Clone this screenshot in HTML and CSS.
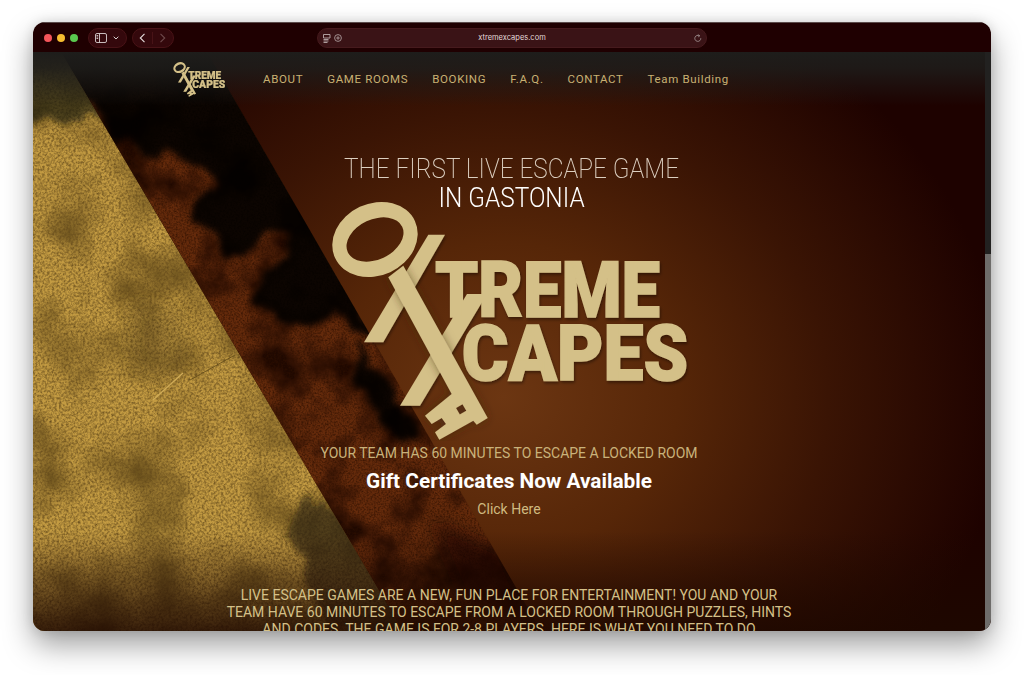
FILE: index.html
```html
<!DOCTYPE html>
<html lang="en">
<head>
    <meta charset="UTF-8">
    <meta name="viewport" content="width=device-width, initial-scale=1.0">
    <title>Xtreme Xcapes</title>
    <link rel="stylesheet" href="styles.css">
</head>
<body>
    <div class="window">
        <div class="toolbar">
            <div class="lights">
                <span class="light red"></span>
                <span class="light yellow"></span>
                <span class="light green"></span>
            </div>
            <div class="pill sidebar-pill">
                <svg width="12" height="10" viewBox="0 0 12 10"><rect x=".5" y=".5" width="11" height="9" rx="1.5" fill="none" stroke="#d8cfcf" stroke-width=".9"/><path d="M4.5 .5v9M1.5 2.5h1.700M1.5 4h1.700M1.5 5.500h1.700" fill="none" stroke="#d8cfcf" stroke-width=".9"/></svg>
                <svg width="6" height="4" viewBox="0 0 6 4"><path d="M.7 .7 3 3l2.300-2.300" fill="none" stroke="#d8cfcf" stroke-width="1"/></svg>
            </div>
            <div class="pill nav-pill">
                <svg width="7" height="10" viewBox="0 0 7 10"><path d="M5.500 .8 1.300 5l4.200 4.200" fill="none" stroke="#e4dcdc" stroke-width="1.100"/></svg>
                <span class="pill-sep"></span>
                <svg width="7" height="10" viewBox="0 0 7 10"><path d="M1.500 .8 5.700 5 1.500 9.200" fill="none" stroke="#6e4a4c" stroke-width="1.100"/></svg>
            </div>
            <div class="address">
                <div class="address-icons">
                    <svg width="8" height="9" viewBox="0 0 8 9"><path d="M.5 .5h6.500v3.500h-6.500zM.5 5.500h5M.5 7h5M.5 8.500h4" fill="none" stroke="#b9aaaa" stroke-width=".9"/></svg>
                    <svg width="8" height="8" viewBox="0 0 8 8"><circle cx="4" cy="4" r="3.400" fill="none" stroke="#b9aaaa" stroke-width=".8"/><path d="M4 2.200v3.600M2.200 4h3.600" stroke="#b9aaaa" stroke-width=".8"/></svg>
                </div>
                <span class="url">xtremexcapes.com</span>
                <svg class="reload" width="8" height="9" viewBox="0 0 8 9"><path d="M6.800 4.200a3 3 0 1 1-1.300-2.300M4.200 .4l1.500 1.500-1.500 1" fill="none" stroke="#a99a9a" stroke-width=".8"/></svg>
            </div>
        </div>

        <div class="site">
            <svg class="art" viewBox="33 52 958 579" preserveAspectRatio="none">
                <defs>
                    <filter id="goldTex" x="0" y="0" width="100%" height="100%" color-interpolation-filters="sRGB">
                        <feTurbulence type="fractalNoise" baseFrequency=".016" numOctaves="5" seed="4" result="big"/>
                        <feColorMatrix in="big" type="matrix" values="0 0 0 0 .35  0 0 0 0 .26  0 0 0 0 .08  1.700 0 0 0 -.68" result="blot"/>
                        <feTurbulence type="fractalNoise" baseFrequency=".42" numOctaves="3" seed="9" result="fine"/>
                        <feColorMatrix in="fine" type="matrix" values="0 0 0 0 .38  0 0 0 0 .28  0 0 0 0 .1  1.600 0 0 0 -.56" result="grain"/>
                        <feMerge result="all">
                            <feMergeNode in="SourceGraphic"/>
                            <feMergeNode in="blot"/>
                            <feMergeNode in="grain"/>
                        </feMerge>
                        <feComposite in="all" in2="SourceGraphic" operator="in"/>
                    </filter>
                    <filter id="rustTex" x="0" y="0" width="100%" height="100%" color-interpolation-filters="sRGB">
                        <feTurbulence type="fractalNoise" baseFrequency=".02" numOctaves="5" seed="21" result="big"/>
                        <feColorMatrix in="big" type="matrix" values="0 0 0 0 .12  0 0 0 0 .03  0 0 0 0 0  3 0 0 0 -1.250" result="blot"/>
                        <feTurbulence type="fractalNoise" baseFrequency=".55" numOctaves="2" seed="3" result="fine"/>
                        <feColorMatrix in="fine" type="matrix" values="0 0 0 0 .18  0 0 0 0 .06  0 0 0 0 0  1.600 0 0 0 -.6" result="grain"/>
                        <feMerge result="all">
                            <feMergeNode in="SourceGraphic"/>
                            <feMergeNode in="blot"/>
                            <feMergeNode in="grain"/>
                        </feMerge>
                        <feComposite in="all" in2="SourceGraphic" operator="in"/>
                    </filter>
                    <filter id="ragged" x="-10%" y="-10%" width="120%" height="120%">
                        <feTurbulence type="fractalNoise" baseFrequency=".04" numOctaves="4" seed="7" result="warp"/>
                        <feDisplacementMap in="SourceGraphic" in2="warp" scale="26" xChannelSelector="R" yChannelSelector="G"/>
                        <feGaussianBlur stdDeviation="3"/>
                    </filter>
                    <filter id="soft"><feGaussianBlur stdDeviation="9"/></filter>
                    <clipPath id="goldClip"><polygon points="33,52 61,52 403,631 33,631"/></clipPath>
                    <clipPath id="rustClip"><polygon points="61,52 207,52 541,631 403,631"/></clipPath>
                </defs>
                <polygon points="61,52 207,52 541,631 403,631" fill="#642a0b" filter="url(#rustTex)"/>
                <g clip-path="url(#rustClip)">
                    <path class="rust-dark" d="M40 40H215L385 345 340 320 300 325 250 300 262 275 285 255 290 235 262 235 245 258 222 255 215 232 190 220 190 200 215 190 200 165 172 152 150 155 117 138 90 110Z" filter="url(#ragged)"/>
                    <path class="rust-dark" d="M360 345 425 440 405 445 375 410 352 375Z" filter="url(#ragged)"/>
                    <path d="M430 520 500 550 530 620 470 610Z" fill="#120400" opacity=".7" filter="url(#soft)"/>
                </g>
                <polygon points="33,52 61,52 403,631 33,631" fill="#c39b42" filter="url(#goldTex)"/>
                <g clip-path="url(#goldClip)">
                    <path d="M25 40H85L115 122 88 118 70 125 45 118 25 128Z" fill="#1e1a0a" opacity=".7" filter="url(#ragged)"/>
                    <path d="M305 495 350 510 420 631H330L305 580 290 530Z" fill="#1d1608" opacity=".58" filter="url(#ragged)"/>
                    <path d="M130 300 180 310 190 360 150 385 125 350Z" fill="#4a3812" opacity=".28" filter="url(#soft)"/>
                    <path d="M153 400 183 373" stroke="#d0ac58" stroke-width="1.200" fill="none"/>
                    <path d="M190 380 235 355" stroke="#5e4818" stroke-width=".8" fill="none"/>
                </g>
            </svg>
            <div class="shade"></div>

            <nav class="topnav">
                <svg class="logo-small" viewBox="331 202 361 240"><use href="#xlogo"/></svg>
                <a href="#">ABOUT</a>
                <a href="#">GAME ROOMS</a>
                <a href="#">BOOKING</a>
                <a href="#">F.A.Q.</a>
                <a href="#">CONTACT</a>
                <a href="#">Team Building</a>
            </nav>

            <div class="hero">
                <h1 class="headline">THE FIRST LIVE ESCAPE GAME<br><span class="headline-city">IN GASTONIA</span></h1>
                <svg class="logo-big" viewBox="331 202 361 240">
                    <defs>
                        <filter id="logoShade" x="-10%" y="-10%" width="120%" height="120%"><feDropShadow dx="1" dy="2" stdDeviation="1.500" flood-color="#000" flood-opacity=".4"/></filter>
                        <filter id="shaftShade" x="-30%" y="-10%" width="160%" height="120%"><feDropShadow dx="0" dy="0" stdDeviation="5" flood-color="#3a2a10" flood-opacity=".55"/></filter>
                        <g id="xlogo" fill="#d4c088">
                            <g filter="url(#logoShade)">
                                <polygon points="428.300,235.700 445,235.700 383.300,343.300 364,343.300"/>
                                <polygon points="467,295 487,295 420,406.700 400,406.700"/>
                                <text class="logo-word" x="435" y="318.300" textLength="225" lengthAdjust="spacingAndGlyphs">TREME</text>
                                <text class="logo-word" x="461.700" y="381" textLength="226.500" lengthAdjust="spacingAndGlyphs">CAPES</text>
                            </g>
                            <g filter="url(#shaftShade)">
                                <path fill-rule="evenodd" d="M388.300 278.300 403.300 266.700 487.700 419 476.700 425.700 473.300 421.700 439.300 440.700 435 433.300 446 425 441.700 419 431.700 425 425 416.700 451.700 395ZM456 409l6.500-3.800 3.800 6.500-6.500 3.800Z"/>
                            </g>
                            <path fill-rule="evenodd" d="M335.100 259.100A44 36 -25 1 1 414.900 221.900 44 36 -25 1 1 335.100 259.100ZM347.800 253.200A30 20 -25 1 0 402.200 227.800 30 20 -25 1 0 347.800 253.200Z"/>
                        </g>
                    </defs>
                    <use href="#xlogo"/>
                </svg>
                <p class="tagline">YOUR TEAM HAS 60 MINUTES TO ESCAPE A LOCKED ROOM</p>
                <h2 class="gift">Gift Certificates Now Available</h2>
                <a class="click" href="#">Click Here</a>
                <p class="intro">LIVE ESCAPE GAMES ARE A NEW, FUN PLACE FOR ENTERTAINMENT! YOU AND YOUR TEAM HAVE 60 MINUTES TO ESCAPE FROM A LOCKED ROOM THROUGH PUZZLES, HINTS AND CODES. THE GAME IS FOR 2-8 PLAYERS. HERE IS WHAT YOU NEED TO DO</p>
            </div>

            <div class="scrollbar"><div class="scroll-thumb"></div></div>
        </div>
    </div>
</body>
</html>
```

FILE: styles.css
```css
html, body {
    height: 675px;
}

body {
    margin: 0;
    padding-top: 22px;
    box-sizing: border-box;
    background: #fff;
    font-family: Roboto, "Liberation Sans", sans-serif;
}

.window {
    display: flex;
    flex-direction: column;
    width: 958px;
    height: 609px;
    margin-left: 33px;
    border-radius: 12px;
    overflow: hidden;
    box-shadow: 0 14px 30px rgba(0, 0, 0, 0.38), 0 0 12px rgba(0, 0, 0, 0.12);
}

/* browser chrome */
.toolbar {
    display: flex;
    align-items: center;
    flex: 0 0 30px;
    padding-left: 11px;
    background: #1f0001;
    border-top: 1px solid #5a4a4a;
    box-sizing: border-box;
}

.lights {
    display: flex;
    gap: 5px;
    margin-right: 10px;
}

.light {
    width: 8px;
    height: 8px;
    border-radius: 50%;
}

.red { background: #f4555a; }
.yellow { background: #f6bd30; }
.green { background: #5ac94f; }

.pill {
    display: flex;
    align-items: center;
    height: 20px;
    box-sizing: border-box;
    border-radius: 10px;
    background: #34080c;
    border: 1px solid #481317;
}

.sidebar-pill {
    width: 39px;
    gap: 6px;
    padding-left: 6px;
}

.nav-pill {
    width: 42px;
    margin-left: 5px;
    padding-left: 6px;
    gap: 6px;
}

.pill-sep {
    width: 1px;
    height: 12px;
    background: #481317;
}

.address {
    position: relative;
    display: flex;
    align-items: center;
    justify-content: center;
    width: 390px;
    height: 20px;
    margin-left: 143px;
    border-radius: 10px;
    background: #3a1316;
    border: 1px solid #461a1d;
    box-sizing: border-box;
}

.address-icons {
    position: absolute;
    left: 5px;
    top: 5px;
    display: flex;
    gap: 3px;
}

.reload {
    position: absolute;
    right: 4px;
    top: 5px;
}

.url {
    font-family: Inter, "Liberation Sans", sans-serif;
    font-size: 7.5px;
    color: #e2dada;
}

/* the site itself */
.site {
    position: relative;
    flex: 1;
    overflow: hidden;
    background: radial-gradient(ellipse 500px 440px at 470px 345px, #6c3612 0, #562608 35%, #3a1404 65%, #1e0200 100%);
}

.art {
    position: absolute;
    left: 0;
    top: 0;
    width: 958px;
    height: 579px;
}

.rust-dark {
    fill: #040000;
    opacity: 0.88;
}

.shade {
    position: absolute;
    left: 0;
    right: 0;
    bottom: 0;
    height: 100px;
    background: linear-gradient(rgba(30, 8, 0, 0), rgba(30, 8, 0, 0.85));
}

.topnav {
    position: relative;
    display: flex;
    align-items: center;
    height: 54px;
    padding-left: 140px;
    background: linear-gradient(#1e1d1b 0, rgba(30, 29, 27, 0.85) 30%, rgba(30, 29, 27, 0));
}

.topnav a {
    margin-right: 24px;
    font-size: 11.5px;
    letter-spacing: 0.65px;
    color: #c8b173;
    text-decoration: none;
}

.logo-small {
    width: 53px;
    height: 35px;
    margin-right: 37px;
}

.hero {
    position: relative;
    display: flex;
    flex-direction: column;
    align-items: center;
    padding-right: 6px;
}

.headline {
    margin: 48px 0 0 5px;
    font-size: 28px;
    font-weight: 200;
    line-height: 29px;
    text-align: center;
    color: #dccfc0;
    transform: scaleX(0.87);
}

.headline-city {
    font-weight: 300;
    color: #fff;
}

.logo-big {
    width: 361px;
    height: 240px;
    margin: -11px 0 0 5px;
}

.logo-word {
    font-family: Roboto, "Liberation Sans", sans-serif;
    font-size: 77px;
    font-weight: 900;
    stroke: #d4c088;
    stroke-width: 1.5px;
}

.tagline {
    margin: 2px 0 0;
    font-size: 14px;
    line-height: 20px;
    color: #c9b27a;
}

.gift {
    margin: 5px 0 0;
    font-size: 20.8px;
    font-weight: 700;
    line-height: 26px;
    color: #fff;
}

.click {
    margin-top: 5px;
    font-size: 14px;
    line-height: 20px;
    color: #d0ba80;
    text-decoration: none;
}

.intro {
    width: 570px;
    margin: 68px 0 0;
    font-size: 14px;
    line-height: 17px;
    text-align: center;
    color: #d4c088;
}

.scrollbar {
    position: absolute;
    right: 0;
    top: 0;
    bottom: 0;
    width: 6px;
    background: #6e6c6a;
}

.scroll-thumb {
    height: 202px;
    background: #222120;
}
```
